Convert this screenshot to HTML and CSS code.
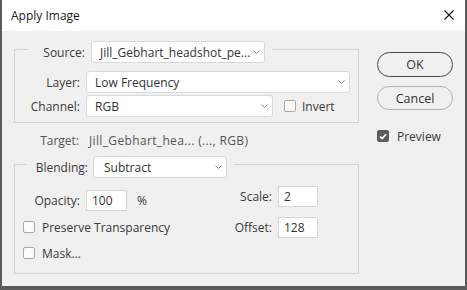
FILE: index.html
```html
<!DOCTYPE html>
<html lang="en">
<head>
    <meta charset="UTF-8">
    <title>Apply Image</title>
    <link rel="stylesheet" href="styles.css">
</head>
<body>
    <div class="dialog">
        <div class="titlebar">
            <span class="title">Apply Image</span>
            <svg class="close" width="10" height="10" viewBox="0 0 10 10">
                <path d="M0.5 0.5L9.5 9.5M9.5 0.5L0.5 9.5" stroke="#1a1a1a" stroke-width="1.1" fill="none"/>
            </svg>
        </div>

        <div class="content">
            <div class="main">
                <fieldset class="group source-group">
                    <legend class="group-head">
                        <span class="label source-label">Source:</span>
                        <div class="dropdown source-drop">
                            <span>Jill_Gebhart_headshot_pe...</span>
                            <svg class="chevron" width="7" height="4" viewBox="0 0 7 4"><path d="M0.5 0.5L3.5 3.5L6.5 0.5" stroke="#8a8a8a" fill="none"/></svg>
                        </div>
                    </legend>
                    <div class="row layer-row">
                        <span class="label">Layer:</span>
                        <div class="dropdown layer-drop">
                            <span>Low Frequency</span>
                            <svg class="chevron" width="7" height="4" viewBox="0 0 7 4"><path d="M0.5 0.5L3.5 3.5L6.5 0.5" stroke="#8a8a8a" fill="none"/></svg>
                        </div>
                    </div>
                    <div class="row channel-row">
                        <span class="label">Channel:</span>
                        <div class="dropdown channel-drop">
                            <span>RGB</span>
                            <svg class="chevron" width="7" height="4" viewBox="0 0 7 4"><path d="M0.5 0.5L3.5 3.5L6.5 0.5" stroke="#8a8a8a" fill="none"/></svg>
                        </div>
                        <label class="check invert"><span class="box"></span>Invert</label>
                    </div>
                </fieldset>

                <div class="row target-row">
                    <span class="label">Target:</span>
                    <span class="target-value">Jill_Gebhart_hea... (..., RGB)</span>
                </div>

                <fieldset class="group blend-group">
                    <legend class="group-head">
                        <span class="label blend-label">Blending:</span>
                        <div class="dropdown blend-drop">
                            <span>Subtract</span>
                            <svg class="chevron" width="7" height="4" viewBox="0 0 7 4"><path d="M0.5 0.5L3.5 3.5L6.5 0.5" stroke="#8a8a8a" fill="none"/></svg>
                        </div>
                    </legend>
                    <div class="blend-body">
                        <div class="blend-left">
                            <div class="row opacity-row">
                                <span class="label">Opacity:</span>
                                <div class="field opacity-field">100</div>
                                <span class="unit">%</span>
                            </div>
                            <label class="check preserve"><span class="box"></span>Preserve Transparency</label>
                            <label class="check mask"><span class="box"></span>Mask...</label>
                        </div>
                        <div class="blend-right">
                            <div class="row">
                                <span class="label small-label">Scale:</span>
                                <div class="field">2</div>
                            </div>
                            <div class="row offset-row">
                                <span class="label small-label">Offset:</span>
                                <div class="field">128</div>
                            </div>
                        </div>
                    </div>
                </fieldset>
            </div>

            <div class="side">
                <button class="btn btn-ok">OK</button>
                <button class="btn btn-cancel">Cancel</button>
                <label class="check preview">
                    <span class="box checked">
                        <svg width="8" height="7" viewBox="0 0 8 7"><path d="M1 3.6L3.1 5.6L7 1.2" stroke="#fff" stroke-width="1.6" fill="none"/></svg>
                    </span>Preview
                </label>
            </div>
        </div>
    </div>
</body>
</html>
```

FILE: styles.css
```css
body {
    margin: 0;
    font-family: "Open Sans", "Noto Sans", sans-serif;
    font-size: 12px;
    color: #3a3a3a;
}
.dialog {
    width: 467px;
    height: 290px;
    box-sizing: border-box;
    border: 2px solid #5a5a5a;
    border-top: none;
    border-bottom-width: 4px;
    background-color: #f0f0f0;
}
.titlebar {
    height: 31px;
    background-color: #fff;
    display: flex;
    align-items: center;
    justify-content: space-between;
    padding: 0 11px 0 9px;
}
.title {
    font-size: 12px;
    color: #1a1a1a;
}
.close {
    margin-top: -1px;
}
.content {
    display: flex;
    gap: 18px;
    padding-left: 12px;
}
.main {
    width: 345px;
}

/* group boxes */
.group {
    margin: 0;
    padding: 0;
    border: 1px solid #d2d2d2;
    min-width: 0;
}
.group-head {
    display: flex;
    align-items: center;
    padding: 5px 7px 0 0;
}
.label {
    width: 65px;
    text-align: right;
    white-space: nowrap;
}
.source-group {
    margin-top: 5px;
    padding: 8px 8px 5px 0;
}
.source-group .group-head {
    margin-left: 13px;
    gap: 6px;
}
.source-group .source-label {
    width: 57px;
}
.blend-group {
    margin-top: 1px;
    padding: 0 0 12px 0;
}
.blend-group .group-head {
    margin-left: 11px;
    gap: 5px;
}
.blend-group .blend-label {
    width: 62px;
}

.row {
    display: flex;
    align-items: center;
    gap: 6px;
}
.channel-row {
    margin-top: 2px;
}

.dropdown {
    height: 22px;
    box-sizing: border-box;
    background-color: #fff;
    border: 1px solid #d9d9d9;
    border-radius: 3px;
    display: flex;
    align-items: center;
    justify-content: space-between;
    padding: 0 4px 0 8px;
    color: #333;
    white-space: nowrap;
}
.source-drop {
    width: 174px;
}
.layer-drop {
    width: 264px;
}
.channel-drop {
    width: 187px;
}
.blend-drop {
    width: 134px;
    padding-left: 10px;
}

.check {
    display: flex;
    align-items: center;
    gap: 7px;
    height: 16px;
}
.box {
    width: 12px;
    height: 12px;
    box-sizing: border-box;
    border: 1px solid #a8a8a8;
    border-radius: 2px;
    background-color: #fbfbfb;
    display: flex;
    align-items: center;
    justify-content: center;
}
.box.checked {
    background-color: #5c5c5c;
    border-color: #5c5c5c;
}
.invert {
    margin-left: 5px;
    gap: 6px;
}

.target-row {
    margin-top: 7px;
    height: 20px;
    gap: 10px;
    color: #555;
}
.target-value {
    letter-spacing: 0.35px;
}

.blend-body {
    display: flex;
    justify-content: space-between;
    padding-right: 40px;
}
.blend-left {
    padding-top: 12px;
}
.field {
    width: 40px;
    height: 21px;
    box-sizing: border-box;
    background-color: #fff;
    border: 1px solid #d6d6d6;
    padding-left: 5px;
    line-height: 19px;
    color: #333;
}
.opacity-field {
    width: 41px;
}
.unit {
    margin-left: 4px;
}
.preserve {
    margin: 8px 0 0 8px;
}
.mask {
    margin: 10px 0 0 8px;
}
.blend-right {
    padding-top: 8px;
}
.small-label {
    width: 50px;
}
.offset-row {
    margin-top: 10px;
}

/* buttons */
.side {
    width: 76px;
    padding-top: 21px;
    display: flex;
    flex-direction: column;
}
.btn {
    font-family: inherit;
    font-size: 12.5px;
    color: #333;
    background-color: #f0f0f0;
    border: 1px solid #b0b0b0;
    border-radius: 13px;
    height: 25px;
    padding: 0;
}
.btn-ok {
    border-color: #4a4a4a;
}
.btn-cancel {
    margin-top: 9px;
    height: 24px;
}
.preview {
    margin-top: 18px;
    gap: 8px;
}
```
